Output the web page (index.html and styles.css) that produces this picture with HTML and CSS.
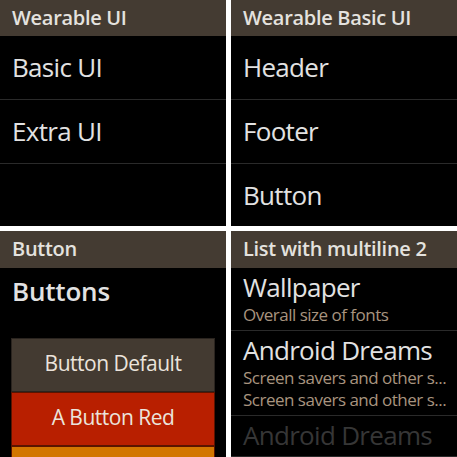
FILE: index.html
```html
<!DOCTYPE html>
<html>
<head>
<meta charset="utf-8">
<link rel="stylesheet" href="styles.css">
</head>
<body>
<div class="grid">
  <section class="panel">
    <div class="header">Wearable UI</div>
    <ul class="list">
      <li class="item">Basic UI</li>
      <li class="item">Extra UI</li>
    </ul>
  </section>
  <section class="panel">
    <div class="header">Wearable Basic UI</div>
    <ul class="list">
      <li class="item">Header</li>
      <li class="item">Footer</li>
      <li class="item">Button</li>
    </ul>
  </section>
  <section class="panel">
    <div class="header header-tall">Button</div>
    <h2 class="section-title">Buttons</h2>
    <div class="buttons">
      <div class="btn btn-default">Button Default</div>
      <div class="btn btn-red">A Button Red</div>
      <div class="btn btn-orange">A Button Orange</div>
    </div>
  </section>
  <section class="panel">
    <div class="header header-tall">List with multiline 2</div>
    <ul class="mlist">
      <li class="mitem">
        <div class="mtitle">Wallpaper</div>
        <div class="msub">Overall size of fonts</div>
      </li>
      <li class="mitem">
        <div class="mtitle">Android Dreams</div>
        <div class="msub">Screen savers and other s...</div>
        <div class="msub">Screen savers and other s...</div>
      </li>
      <li class="mitem mitem-disabled">
        <div class="mtitle">Android Dreams</div>
      </li>
    </ul>
  </section>
</div>
</body>
</html>
```

FILE: styles.css
```css
* { box-sizing: border-box; }
html, body {
  margin: 0;
  padding: 0;
  background: #ffffff;
}
body {
  font-family: "Open Sans", "Noto Sans", sans-serif;
}
.grid {
  display: grid;
  grid-template-columns: 226px 226px;
  grid-template-rows: 226px 226px;
  gap: 5px;
  width: 457px;
  height: 457px;
}
.panel {
  background: #000000;
  overflow: hidden;
  display: flex;
  flex-direction: column;
}
.header {
  flex: none;
  height: 36px;
  line-height: 36px;
  padding: 0 12px;
  background: #443b32;
  color: #e4e2df;
  font-size: 20px;
  font-weight: 600;
  letter-spacing: -0.3px;
  white-space: nowrap;
}
.header-tall {
  height: 37px;
}
.list, .mlist {
  list-style: none;
  margin: 0;
  padding: 0;
}
.item {
  height: 64px;
  line-height: 62px;
  padding: 0 12px 1px;
  border-bottom: 1px solid #2a2a2a;
  color: #e2e2e2;
  font-size: 26px;
  letter-spacing: -0.7px;
  white-space: nowrap;
}
.section-title {
  margin: 5px 0 0;
  padding: 0 12px;
  height: 36px;
  line-height: 36px;
  color: #e2e2e2;
  font-size: 26px;
  font-weight: 600;
  letter-spacing: -0.2px;
}
.buttons {
  margin: 29px 11px 0;
  display: flex;
  flex-direction: column;
}
.btn {
  flex: none;
  height: 54px;
  line-height: 48px;
  padding-bottom: 4px;
  border: 1px solid #2a241f;
  text-align: center;
  color: #ebe4dc;
  font-size: 21px;
  letter-spacing: -0.5px;
  white-space: nowrap;
}
.btn-default { background: #433a31; }
.btn-red { background: #b81f00; border-color: #5a1400; }
.btn-orange { background: #d27600; border-color: #5a1400; }
.mitem {
  padding: 2px 12px 4px;
  border-bottom: 1px solid #2a2a2a;
  white-space: nowrap;
}
.mtitle {
  height: 34px;
  line-height: 34px;
  color: #e2e2e2;
  font-size: 26px;
  letter-spacing: -0.7px;
}
.msub {
  height: 22px;
  line-height: 22px;
  color: #a8947f;
  font-size: 17px;
  letter-spacing: -0.5px;
}
.mitem-disabled .mtitle {
  color: #363636;
}
```
